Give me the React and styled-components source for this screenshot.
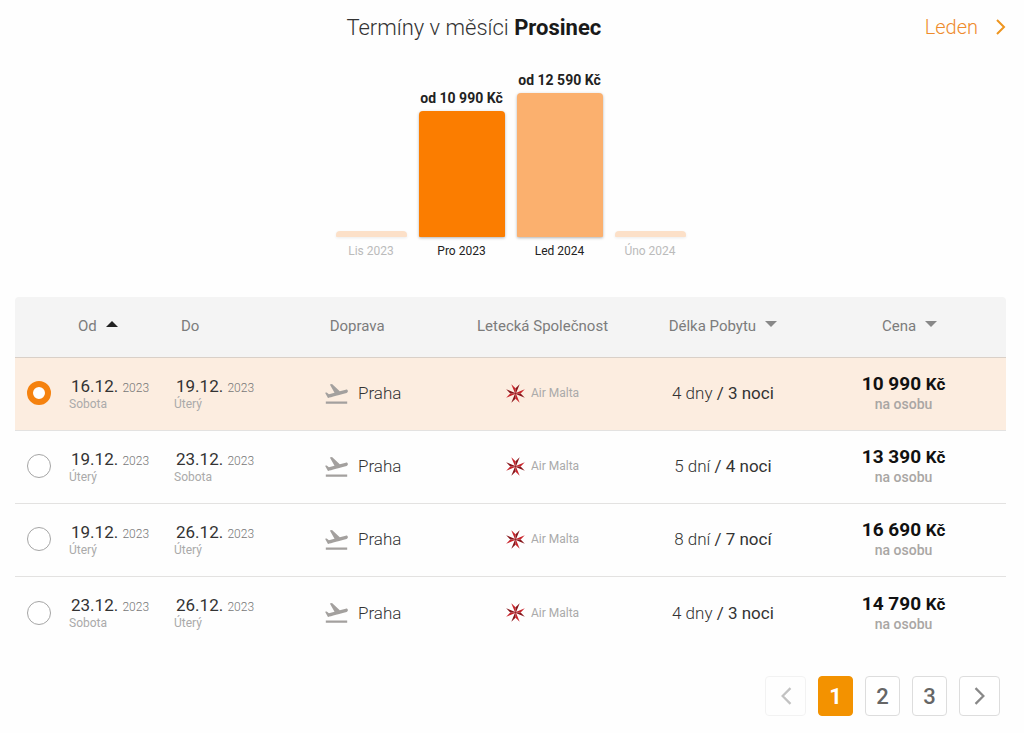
import React, { useState } from "react";
import styled, { createGlobalStyle } from "styled-components";
import { MdFlightTakeoff } from "react-icons/md";

const GlobalStyle = createGlobalStyle`
  * {
    box-sizing: border-box;
  }

  body {
    margin: 0;
    background-color: #fefefe;
    color: #333;
    font-family: Roboto, "Liberation Sans", sans-serif;
  }

  button {
    font-family: inherit;
    cursor: pointer;
  }
`;

const Page = styled.main`
  padding: 11px 18px 16px 15px;
`;

const Header = styled.header`
  display: flex;
  align-items: center;
  height: 32px;
`;

const Title = styled.h1`
  flex: 1;
  margin: 0;
  padding-left: 8px;
  font-size: 22px;
  font-weight: 300;
  text-align: center;

  strong {
    font-weight: 700;
    color: #1a1a1a;
  }
`;

const NextMonth = styled.a`
  display: flex;
  align-items: center;
  gap: 18px;
  font-size: 20px;
  font-weight: 300;
  color: #ee8b2c;
  text-decoration: none;
`;

const Chart = styled.div`
  display: flex;
  justify-content: center;
  align-items: flex-end;
  gap: 12px;
  height: 216px;
`;

const Month = styled.button`
  width: ${({ $tall }) => ($tall ? "86px" : "71px")};
  padding: 0;
  border: none;
  background: none;
  color: #222;
  white-space: nowrap;

  &:disabled {
    color: #bbb;
    cursor: default;
  }
`;

const MonthPrice = styled.span`
  display: flex;
  justify-content: center;
  margin-bottom: 4px;
  font-size: 14px;
  line-height: 18px;
  font-weight: 700;
`;

const Bar = styled.span`
  display: block;
  border-radius: 4px 4px 1px 1px;
  background-color: ${({ $color }) => $color};
  box-shadow: 0 1px 3px rgba(0, 0, 0, ${({ $tall }) => ($tall ? 0.3 : 0.08)});
`;

const MonthName = styled.span`
  display: block;
  margin-top: 6px;
  font-size: 12px;
  line-height: 16px;
`;

const Table = styled.table`
  width: 100%;
  margin-top: 38px;
  border-collapse: separate;
  border-spacing: 0;
  table-layout: fixed;
`;

const Col = styled.col`
  width: ${({ $width }) => $width};
`;

const HeadCell = styled.th`
  height: 61px;
  padding: ${({ $padding }) => $padding || "0 0 2px"};
  border-bottom: 1px solid #d9d0c8;
  background-color: #f4f4f4;
  color: #7c7c7c;
  font-size: 15px;
  font-weight: 400;
  text-align: ${({ $align }) => $align || "center"};

  &:first-child {
    border-top-left-radius: 4px;
  }

  &:last-child {
    border-top-right-radius: 4px;
  }
`;

const SortButton = styled.button`
  display: inline-flex;
  align-items: center;
  gap: 9px;
  padding: 0;
  border: none;
  background: none;
  color: inherit;
  font-size: 15px;
`;

const Arrow = styled.svg`
  width: 12px;
  height: 6px;
  margin-bottom: 5px;
  fill: ${({ $active }) => ($active ? "#222" : "#888")};
`;

const Row = styled.tr`
  background-color: ${({ $selected }) => ($selected ? "#fcede0" : "transparent")};

  &:last-child td {
    border-bottom: none;
  }
`;

const Cell = styled.td`
  height: 73px;
  padding: ${({ $padding }) => $padding || "0 0 2px"};
  border-bottom: 1px solid #e3e2e1;
  text-align: ${({ $align }) => $align || "center"};
`;

const Radio = styled.input`
  appearance: none;
  display: block;
  width: 24px;
  height: 24px;
  margin: 0 auto;
  border: 1px solid #a5a5a5;
  border-radius: 50%;
  background-color: #fff;
  cursor: pointer;

  &:checked {
    border: 6px solid #f5820f;
  }
`;

const DateLine = styled.div`
  padding-left: 2px;
  font-size: 17px;
  line-height: 19px;
  color: #333;
  white-space: nowrap;
`;

const Small = styled.span`
  font-size: 12px;
  line-height: 16px;
  font-weight: ${({ $light }) => ($light ? 300 : 400)};
  color: ${({ $light }) => ($light ? "#777" : "#aaa")};
`;

const Weekday = styled(Small)`
  display: block;
`;

const Inline = styled.div`
  display: flex;
  justify-content: center;
  align-items: center;
  gap: ${({ $gap }) => $gap};
  font-size: 17px;
  font-weight: 300;

  svg {
    flex: none;
  }
`;

const Length = styled.span`
  font-size: 17px;
  font-weight: 300;

  strong {
    font-weight: 400;
  }
`;

const Price = styled.div`
  font-size: 19px;
  line-height: 20px;
  font-weight: 700;
  color: #111;

  small {
    font-size: 17px;
  }
`;

const PriceNote = styled.div`
  font-size: 14px;
  line-height: 20px;
  font-weight: 500;
  color: #a9a6a4;
`;

const Pagination = styled.nav`
  display: flex;
  justify-content: flex-end;
  gap: 12px;
  margin-top: 26px;
  padding-right: 6px;
`;

const PageButton = styled.button`
  display: flex;
  justify-content: center;
  align-items: center;
  width: ${({ $wide }) => ($wide ? "41px" : "35px")};
  height: 40px;
  padding: 0;
  border: 1px solid ${({ $active }) => ($active ? "#f39200" : "#ddd")};
  border-radius: 4px;
  background-color: ${({ $active }) => ($active ? "#f39200" : "#fff")};
  color: ${({ $active }) => ($active ? "#fff" : "#666")};
  font-size: 22px;
  font-weight: ${({ $active }) => ($active ? 700 : 500)};

  &:disabled {
    border-color: #eee;
    cursor: default;
    opacity: 0.7;
  }
`;

const months = [
  { name: "Lis 2023", height: 6, color: "#fce0c8" },
  { name: "Pro 2023", height: 126, color: "#fb7d00", price: "od 10 990 Kč" },
  { name: "Led 2024", height: 144, color: "#fbb06e", price: "od 12 590 Kč" },
  { name: "Úno 2024", height: 6, color: "#fce0c8" },
];

const terms = [
  {
    from: ["16.12.", "Sobota"],
    to: ["19.12.", "Úterý"],
    days: "4 dny",
    nights: "3 noci",
    price: "10 990",
  },
  {
    from: ["19.12.", "Úterý"],
    to: ["23.12.", "Sobota"],
    days: "5 dní",
    nights: "4 noci",
    price: "13 390",
  },
  {
    from: ["19.12.", "Úterý"],
    to: ["26.12.", "Úterý"],
    days: "8 dní",
    nights: "7 nocí",
    price: "16 690",
  },
  {
    from: ["23.12.", "Sobota"],
    to: ["26.12.", "Úterý"],
    days: "4 dny",
    nights: "3 noci",
    price: "14 790",
  },
];

function Chevron({ left, color, width, height, stroke }) {
  return (
    <svg width={width} height={height} viewBox="0 0 10 16" aria-hidden="true">
      <path
        d={left ? "M9 1 2 8l7 7" : "M1 1l7 7-7 7"}
        fill="none"
        stroke={color}
        strokeWidth={stroke}
      />
    </svg>
  );
}

function SortArrow({ up, active }) {
  return (
    <Arrow $active={active} viewBox="0 0 12 6" aria-hidden="true">
      <path d={up ? "M0 6 6 0l6 6z" : "M0 0h12L6 6z"} />
    </Arrow>
  );
}

function MaltaCross() {
  return (
    <svg width="19" height="19" viewBox="-10 -10 20 20" aria-hidden="true">
      {[0, 90, 180, 270].map((angle) => (
        <g key={angle} transform={`rotate(${angle})`}>
          <path d="M0 1 -4.4 -9.8 0 -5.4z" fill="#c8232a" />
          <path d="M0 1 4.4 -9.8 0 -5.4z" fill="#86151a" />
        </g>
      ))}
    </svg>
  );
}

function TermDate({ date }) {
  return (
    <>
      <DateLine>
        {date[0]} <Small $light>2023</Small>
      </DateLine>
      <Weekday>{date[1]}</Weekday>
    </>
  );
}

export default function App() {
  const [selected, setSelected] = useState(0);
  const [page, setPage] = useState(1);

  return (
    <Page>
      <GlobalStyle />
      <Header>
        <Title>
          Termíny v měsíci <strong>Prosinec</strong>
        </Title>
        <NextMonth href="#leden">
          Leden
          <Chevron color="#ee951f" width={10} height={16} stroke={2} />
        </NextMonth>
      </Header>

      <Chart>
        {months.map(({ name, height, color, price }) => (
          <Month key={name} $tall={Boolean(price)} disabled={!price}>
            {price && <MonthPrice>{price}</MonthPrice>}
            <Bar $color={color} $tall={Boolean(price)} style={{ height }} />
            <MonthName>{name}</MonthName>
          </Month>
        ))}
      </Chart>

      <Table>
        <colgroup>
          <Col $width="47px" />
          <Col $width="105px" />
          <Col $width="105px" />
          <Col $width="18.2%" />
          <Col $width="18.2%" />
          <Col $width="18.2%" />
          <Col />
        </colgroup>
        <thead>
          <tr>
            <HeadCell />
            <HeadCell $align="left" $padding="0 0 2px 16px">
              <SortButton>
                Od <SortArrow up active />
              </SortButton>
            </HeadCell>
            <HeadCell $align="left" $padding="0 0 2px 14px">
              Do
            </HeadCell>
            <HeadCell $padding="0 10px 2px 0">Doprava</HeadCell>
            <HeadCell>Letecká Společnost</HeadCell>
            <HeadCell>
              <SortButton>
                Délka Pobytu <SortArrow />
              </SortButton>
            </HeadCell>
            <HeadCell>
              <SortButton>
                Cena <SortArrow />
              </SortButton>
            </HeadCell>
          </tr>
        </thead>
        <tbody>
          {terms.map((term, i) => (
            <Row key={i} $selected={selected === i}>
              <Cell>
                <Radio
                  type="radio"
                  name="term"
                  aria-label={`${term.from[0]} ${term.to[0]}`}
                  checked={selected === i}
                  onChange={() => setSelected(i)}
                />
              </Cell>
              <Cell $align="left" $padding="0 0 0 7px">
                <TermDate date={term.from} />
              </Cell>
              <Cell $align="left" $padding="0 0 0 7px">
                <TermDate date={term.to} />
              </Cell>
              <Cell>
                <Inline $gap="8px">
                  <MdFlightTakeoff size={27} color="#a3a09e" />
                  Praha
                </Inline>
              </Cell>
              <Cell>
                <Inline $gap="6px">
                  <MaltaCross />
                  <Small>Air Malta</Small>
                </Inline>
              </Cell>
              <Cell>
                <Length>
                  {term.days} <strong>/ {term.nights}</strong>
                </Length>
              </Cell>
              <Cell $padding="0 12px 0 0">
                <Price>
                  {term.price} <small>Kč</small>
                </Price>
                <PriceNote>na osobu</PriceNote>
              </Cell>
            </Row>
          ))}
        </tbody>
      </Table>

      <Pagination>
        <PageButton
          $wide
          disabled={page === 1}
          aria-label="Předchozí"
          onClick={() => setPage(page - 1)}
        >
          <Chevron left color="#aaa" width={12} height={18} stroke={2} />
        </PageButton>
        {[1, 2, 3].map((n) => (
          <PageButton key={n} $active={page === n} onClick={() => setPage(n)}>
            {n}
          </PageButton>
        ))}
        <PageButton
          $wide
          disabled={page === 3}
          aria-label="Další"
          onClick={() => setPage(page + 1)}
        >
          <Chevron color="#888" width={12} height={18} stroke={2} />
        </PageButton>
      </Pagination>
    </Page>
  );
}
